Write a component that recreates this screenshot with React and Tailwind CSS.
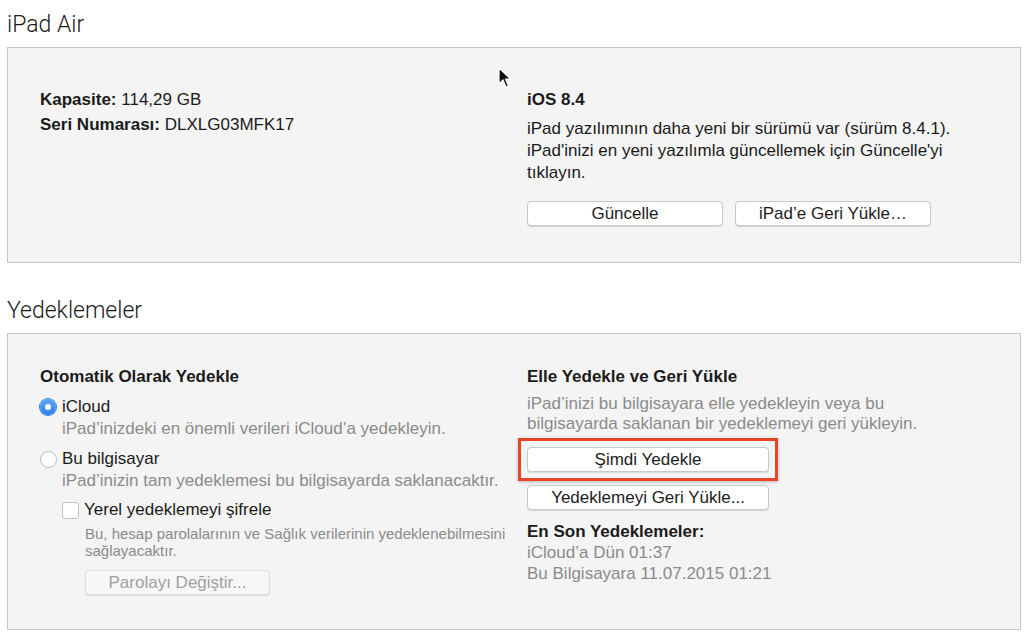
import React from "react";

const Button = ({ children, className = "", disabled = false }) => (
    <button
        type="button"
        className={`h-[25px] rounded-[4px] border text-[17px] leading-none shadow-[0_1px_1px_rgba(0,0,0,0.12)] ${
            disabled ? "border-[#dedede] bg-[#f7f7f7] text-[#a0a0a0]" : "border-[#c9c9c9] bg-white text-[#1c1c1c]"
        } ${className}`}
    >
        {children}
    </button>
);

const Radio = ({ checked }) =>
    checked ? (
        <span className="flex h-[16px] w-[16px] shrink-0 items-center justify-center rounded-full bg-gradient-to-b from-[#5aa4f6] to-[#2f80ec] shadow-[0_0_0_1px_#2f7ee0]">
            <span className="h-[6px] w-[6px] rounded-full bg-white" />
        </span>
    ) : (
        <span className="h-[17px] w-[17px] shrink-0 rounded-full border border-[#bdbdbd] bg-white" />
    );

const App = () => {
    return (
        <div className="relative min-h-screen bg-white pl-[7px] pr-[3px] font-['Liberation_Sans',Arial,sans-serif] text-[#1b1b1b]">
            {/* mouse pointer */}
            <svg className="absolute left-[498px] top-[67px]" width="14" height="22" viewBox="0 0 14 22">
                <path d="M1 1 L1 17 L5 13 L8 20 L10.5 19 L7.5 12 L12.5 12 Z" fill="#111" stroke="#fff" strokeWidth="1.2" strokeLinejoin="round" />
            </svg>

            {/* iPad Air */}
            <h1 className="pt-[12px] font-['Roboto',sans-serif] text-[23px] font-light leading-[26px] text-[#1a1a1a]">iPad Air</h1>
            <div className="mt-[9px] flex h-[216px] border border-[#c7c7c7] bg-[#f4f4f4]">
                <div className="w-[519px] pl-[32px] pt-[39px] text-[17px] leading-[25px]">
                    <p><span className="font-bold">Kapasite:</span> 114,29 GB</p>
                    <p><span className="font-bold">Seri Numarası:</span> DLXLG03MFK17</p>
                </div>
                <div className="flex-1 pt-[41px] text-[17px] leading-[22px]">
                    <p className="font-bold">iOS 8.4</p>
                    <p className="mt-[7px] w-[470px]">
                        iPad yazılımının daha yeni bir sürümü var (sürüm 8.4.1). iPad'inizi en yeni yazılımla güncellemek için Güncelle'yi tıklayın.
                    </p>
                    <div className="mt-[17px] flex gap-[12px]">
                        <Button className="w-[196px]">Güncelle</Button>
                        <Button className="w-[196px]">iPad’e Geri Yükle…</Button>
                    </div>
                </div>
            </div>

            {/* Yedeklemeler */}
            <h2 className="mt-[35px] font-['Roboto',sans-serif] text-[23px] font-light leading-[26px] text-[#1a1a1a]">Yedeklemeler</h2>
            <div className="mt-[9px] flex h-[297px] border border-[#c7c7c7] bg-[#f4f4f4]">
                <div className="w-[519px] pl-[32px] pt-[32px] text-[17px] leading-[22px]">
                    <p className="font-bold">Otomatik Olarak Yedekle</p>
                    <label className="mt-[8px] flex items-center gap-[6px]">
                        <Radio checked />
                        <span>iCloud</span>
                    </label>
                    <p className="pl-[22px] text-[#8b8b8b]">iPad’inizdeki en önemli verileri iCloud’a yedekleyin.</p>
                    <label className="mt-[8px] flex items-center gap-[5px]">
                        <Radio />
                        <span>Bu bilgisayar</span>
                    </label>
                    <p className="whitespace-nowrap pl-[22px] text-[#8b8b8b]">iPad’inizin tam yedeklemesi bu bilgisayarda saklanacaktır.</p>
                    <div className="pl-[22px]">
                        <label className="mt-[7px] flex items-center gap-[5px]">
                            <span className="h-[17px] w-[17px] rounded-[3px] border border-[#c2c2c2] bg-white" />
                            <span>Yerel yedeklemeyi şifrele</span>
                        </label>
                        <p className="mt-[4px] whitespace-nowrap pl-[23px] text-[15px] leading-[17px] text-[#8b8b8b]">
                            Bu, hesap parolalarının ve Sağlık verilerinin yedeklenebilmesini
                            <br />
                            sağlayacaktır.
                        </p>
                        <Button disabled className="ml-[23px] mt-[11px] w-[185px]">Parolayı Değiştir...</Button>
                    </div>
                </div>
                <div className="flex-1 pt-[32px] text-[17px]">
                    <p className="font-bold leading-[22px]">Elle Yedekle ve Geri Yükle</p>
                    <p className="mt-[6px] w-[420px] leading-[20px] text-[#8b8b8b]">
                        iPad’inizi bu bilgisayara elle yedekleyin veya bu bilgisayarda saklanan bir yedeklemeyi geri yükleyin.
                    </p>
                    <div className="mt-[13px] flex w-[242px] flex-col gap-[13px]">
                        <div className="-m-[9px] border-[3px] border-[#e9442a] p-[6px] shadow-[0_1px_3px_rgba(0,0,0,0.25)]">
                            <Button className="block w-[242px]">Şimdi Yedekle</Button>
                        </div>
                        <Button className="h-[24px] w-[242px]">Yedeklemeyi Geri Yükle...</Button>
                    </div>
                    <p className="mt-[12px] font-bold leading-[20px]">En Son Yedeklemeler:</p>
                    <p className="leading-[21px] text-[#8b8b8b]">iCloud’a Dün 01:37</p>
                    <p className="leading-[21px] text-[#8b8b8b]">Bu Bilgisayara 11.07.2015 01:21</p>
                </div>
            </div>
        </div>
    );
};

export default App;
